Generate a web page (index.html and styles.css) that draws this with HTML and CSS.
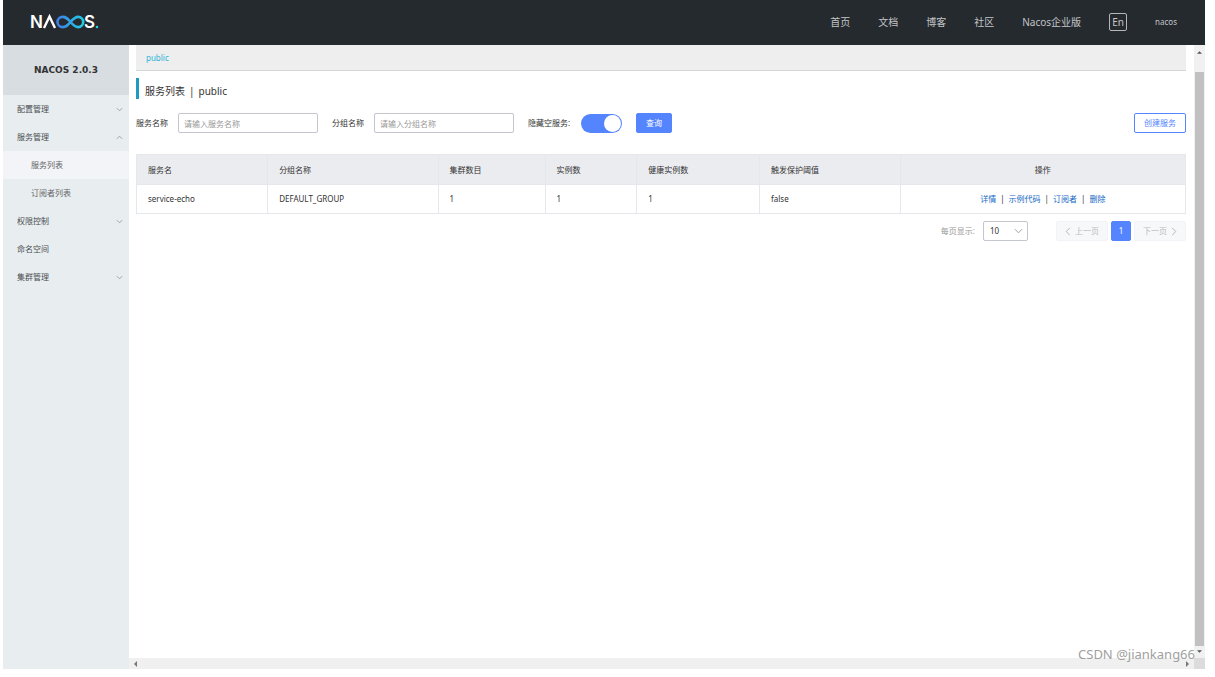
FILE: index.html
```html
<!DOCTYPE html>
<html lang="zh-CN">
<head>
<meta charset="utf-8">
<title>Nacos</title>
<link rel="stylesheet" href="styles.css">
</head>
<body>
<div class="app">
  <header class="header">
    <a class="logo" href="#" aria-label="NACOS">
      <svg width="72" height="26" viewBox="0 0 72 26">
        <defs>
          <linearGradient id="loop" x1="0" x2="1" y1="0" y2="0">
            <stop offset="0" stop-color="#3f7fe8"/>
            <stop offset="0.5" stop-color="#2fa5e6"/>
            <stop offset="1" stop-color="#22cfe0"/>
          </linearGradient>
        </defs>
        <text class="logo-letter" x="0" y="19">N</text>
        <path d="M14 19 L19.500 7.500 L25 19" fill="none" stroke="#fff" stroke-width="2.400"/>
        <path d="M40.500 13C37.500 9.500 36 7.900 32.600 7.900a5.100 5.100 0 0 0 0 10.200c3.400 0 4.900-1.600 7.900-5.100s4.500-5.100 7.600-5.100a5.100 5.100 0 0 1 0 10.200c-3.100 0-4.600-1.600-7.600-5.100z" fill="none" stroke="url(#loop)" stroke-width="2.600"/>
        <text class="logo-letter" x="54" y="19">S</text>
        <circle cx="67" cy="18" r="1.300" fill="#22cfe0"/>
      </svg>
    </a>
    <nav class="nav">
      <a href="#">首页</a>
      <a href="#">文档</a>
      <a href="#">博客</a>
      <a href="#">社区</a>
      <a href="#">Nacos企业版</a>
      <button class="lang" type="button">En</button>
      <a class="user" href="#">nacos</a>
    </nav>
  </header>

  <div class="body">
    <aside class="sidebar">
      <h1 class="version">NACOS 2.0.3</h1>
      <ul class="menu">
        <li><a href="#">配置管理<svg class="chev" viewBox="0 0 8 5"><path d="M1 1l3 3 3-3"/></svg></a></li>
        <li><a href="#">服务管理<svg class="chev" viewBox="0 0 8 5"><path d="M1 4l3-3 3 3"/></svg></a></li>
        <li><a class="sub active" href="#">服务列表</a></li>
        <li><a class="sub" href="#">订阅者列表</a></li>
        <li><a href="#">权限控制<svg class="chev" viewBox="0 0 8 5"><path d="M1 1l3 3 3-3"/></svg></a></li>
        <li><a href="#">命名空间</a></li>
        <li><a href="#">集群管理<svg class="chev" viewBox="0 0 8 5"><path d="M1 1l3 3 3-3"/></svg></a></li>
      </ul>
    </aside>

    <div class="pane">
      <div class="view">
        <main class="main">
          <div class="namespaces"><a href="#">public</a></div>
          <h2 class="title"><span>服务列表</span><span>|</span><span>public</span></h2>

          <form class="search">
            <label for="service">服务名称</label>
            <input class="field" id="service" type="text" placeholder="请输入服务名称">
            <label for="group">分组名称</label>
            <input class="field" id="group" type="text" placeholder="请输入分组名称">
            <label class="wide" for="empty">隐藏空服务:</label>
            <input class="switch" id="empty" type="checkbox" checked>
            <button class="btn primary" type="button">查询</button>
            <button class="btn outline" type="button">创建服务</button>
          </form>

          <table class="table">
            <colgroup>
              <col class="c-name"><col class="c-group"><col class="c-cluster"><col class="c-inst"><col class="c-health"><col class="c-protect"><col>
            </colgroup>
            <thead>
              <tr><th>服务名</th><th>分组名称</th><th>集群数目</th><th>实例数</th><th>健康实例数</th><th>触发保护阈值</th><th class="ops">操作</th></tr>
            </thead>
            <tbody>
              <tr>
                <td>service-echo</td><td>DEFAULT_GROUP</td><td>1</td><td>1</td><td>1</td><td>false</td>
                <td class="ops"><div class="links"><a href="#">详情</a><span>|</span><a href="#">示例代码</a><span>|</span><a href="#">订阅者</a><span>|</span><a href="#">删除</a></div></td>
              </tr>
            </tbody>
          </table>

          <div class="pager">
            <label for="size">每页显示:</label>
            <span class="select">
              <select id="size"><option>10</option></select>
              <svg class="caret" viewBox="0 0 10 6"><path d="M1 1l4 4 4-4"/></svg>
            </span>
            <div class="pages">
              <button class="page" type="button" disabled><svg viewBox="0 0 6 10"><path d="M5 1L1 5l4 4"/></svg>上一页</button>
              <button class="page current" type="button">1</button>
              <button class="page" type="button" disabled>下一页<svg viewBox="0 0 6 10"><path d="M1 1l4 4-4 4"/></svg></button>
            </div>
          </div>
        </main>
        <div class="vbar">
          <svg viewBox="0 0 6 4"><path d="M0 4l3-3 3 3z"/></svg>
          <div class="thumb"></div>
          <svg viewBox="0 0 6 4"><path d="M0 0l3 3 3-3z"/></svg>
        </div>
      </div>
      <div class="hbar">
        <div class="track">
          <svg viewBox="0 0 4 6"><path d="M4 0L1 3l3 3z"/></svg>
          <svg viewBox="0 0 4 6"><path d="M0 0l3 3-3 3z"/></svg>
        </div>
        <div class="corner"></div>
      </div>
    </div>
  </div>
  <div class="watermark">CSDN @jiankang66</div>
</div>
</body>
</html>
```

FILE: styles.css
```css
* {
  box-sizing: border-box;
}

body {
  margin: 0;
  background: #fff;
  color: #333;
  font: 8px/12px "Noto Sans", "Noto Sans CJK SC", sans-serif;
}

a {
  color: inherit;
  text-decoration: none;
}

button,
input,
select {
  margin: 0;
  font: inherit;
}

.app {
  position: relative;
  display: flex;
  flex-direction: column;
  height: 100vh;
  padding: 0 10px 8px 3px;
}

.header {
  display: flex;
  flex: none;
  align-items: center;
  justify-content: space-between;
  height: 45px;
  padding: 0 28px 2px 27px;
  background: #252a2f;
}

.logo {
  display: flex;
}

.logo svg {
  overflow: visible;
}

.logo-letter {
  fill: #fff;
  font: 600 17px Inter, sans-serif;
}

.nav {
  display: flex;
  align-items: center;
  gap: 28px;
  color: #c3c5c7;
  font-size: 10px;
  line-height: 16px;
}

.lang {
  width: 18px;
  height: 18px;
  padding: 0;
  border: 1px solid #b4b6b8;
  border-radius: 2px;
  background: none;
  color: #c3c5c7;
  line-height: 14px;
}

.user {
  font-size: 8px;
}

.body {
  display: flex;
  flex: 1;
  min-height: 0;
}

.sidebar {
  flex: none;
  width: 126px;
  background: #e8edf0;
}

.version {
  height: 50px;
  margin: 0;
  background: #d7dde1;
  color: #333;
  font: bold 9px/50px "DejaVu Sans", sans-serif;
  text-align: center;
}

.menu {
  margin: 0;
  padding: 0;
  list-style: none;
}

.menu a {
  display: flex;
  align-items: center;
  justify-content: space-between;
  height: 28px;
  padding: 0 6px 0 14px;
  color: #4a4d50;
}

.menu .sub {
  padding-left: 28px;
  color: #666;
}

.menu .active {
  background: #f2f4f8;
}

.chev {
  width: 7px;
  height: 5px;
  fill: none;
  stroke: #999;
}

.pane {
  display: flex;
  flex: 1;
  flex-direction: column;
  min-width: 0;
}

.view {
  display: flex;
  flex: 1;
  min-height: 0;
}

.main {
  flex: 1;
  min-width: 0;
  padding: 0 8px 0 7px;
}

.namespaces {
  height: 26px;
  padding: 0 10px;
  border-bottom: 1px solid #d4d6d8;
  background: #eee;
  color: #2bb5d8;
  line-height: 25px;
}

.title {
  display: flex;
  gap: 4px;
  height: 21px;
  margin: 7px 0 14px;
  padding-left: 6px;
  border-left: 3px solid #209bbf;
  font-size: 10px;
  font-weight: 400;
  line-height: 26px;
}

.search {
  display: flex;
  align-items: center;
  height: 20px;
}

.search label {
  min-width: 34px;
  margin-right: 8px;
  white-space: nowrap;
}

.search .wide {
  min-width: 45px;
}

.field {
  width: 140px;
  height: 20px;
  margin-right: 14px;
  padding: 0 5px;
  border: 1px solid #c4c6cf;
  border-radius: 2px;
}

.field::placeholder {
  color: #999;
}

.switch {
  display: flex;
  justify-content: flex-end;
  width: 41px;
  height: 19px;
  margin-right: 14px;
  padding: 1px;
  border-radius: 10px;
  background: #5584ff;
  appearance: none;
}

.switch::before {
  width: 17px;
  height: 17px;
  border-radius: 50%;
  background: #fff;
  content: "";
}

.btn {
  height: 20px;
  padding: 0 9px;
  border: 1px solid #5584ff;
  border-radius: 2px;
}

.primary {
  background: #5584ff;
  color: #fff;
}

.outline {
  margin-left: auto;
  background: #fff;
  color: #5584ff;
}

.table {
  width: 100%;
  margin: 21px 0 7px;
  border: 1px solid #e6e7eb;
  border-collapse: collapse;
  table-layout: fixed;
}

.table th,
.table td {
  height: 29px;
  padding: 0 11px;
  border: 1px solid #e6e7eb;
  font-weight: 400;
  text-align: left;
}

.table th {
  height: 30px;
  background: #ebecf0;
}

.table .ops {
  text-align: center;
}

.c-name { width: 12.5%; }
.c-group { width: 16.25%; }
.c-cluster { width: 10.2%; }
.c-inst { width: 8.75%; }
.c-health { width: 11.7%; }
.c-protect { width: 13.4%; }

.links {
  display: flex;
  justify-content: center;
  gap: 4px;
}

.links a {
  color: #1269c4;
}

.pager {
  display: flex;
  align-items: center;
  justify-content: flex-end;
  gap: 8px;
  color: #999;
}

.select {
  position: relative;
  width: 45px;
  height: 20px;
  margin-right: 20px;
}

.select select {
  width: 100%;
  height: 100%;
  padding: 0 6px;
  border: 1px solid #c4c6cf;
  border-radius: 2px;
  background: #fff;
  color: #333;
  appearance: none;
}

.caret {
  position: absolute;
  top: 7px;
  right: 5px;
  width: 9px;
  height: 6px;
  fill: none;
  stroke: #999;
}

.pages {
  display: flex;
  gap: 3px;
}

.page {
  display: flex;
  align-items: center;
  justify-content: center;
  gap: 4px;
  width: 52px;
  height: 20px;
  padding: 0;
  border: 1px solid #f2f3f7;
  border-radius: 2px;
  background: #f7f8fa;
  color: #bbb;
}

.page svg {
  width: 6px;
  height: 9px;
  fill: none;
  stroke: #b0b0b0;
}

.page.current {
  width: 20px;
  border-color: #5584ff;
  background: #5584ff;
  color: #fff;
}

.vbar {
  display: flex;
  flex: none;
  flex-direction: column;
  align-items: center;
  justify-content: space-between;
  gap: 4px;
  width: 11px;
  padding: 5px 0 4px;
  background: #f1f1f1;
}

.vbar svg {
  flex: none;
  width: 5px;
  height: 4px;
  fill: #555;
}

.thumb {
  flex: 1;
  width: 9px;
  margin-top: 14px;
  background: #c1c1c1;
}

.hbar {
  display: flex;
  flex: none;
  height: 11px;
}

.track {
  display: flex;
  flex: 1;
  align-items: center;
  justify-content: space-between;
  padding: 0 4px;
  background: #f0f0f0;
}

.track svg {
  width: 4px;
  height: 6px;
  fill: #777;
}

.corner {
  width: 11px;
  background: #dcdcdc;
}

.watermark {
  position: absolute;
  right: 20px;
  bottom: 13px;
  color: #a0a0a0;
  font-size: 13px;
  line-height: 20px;
}
```
